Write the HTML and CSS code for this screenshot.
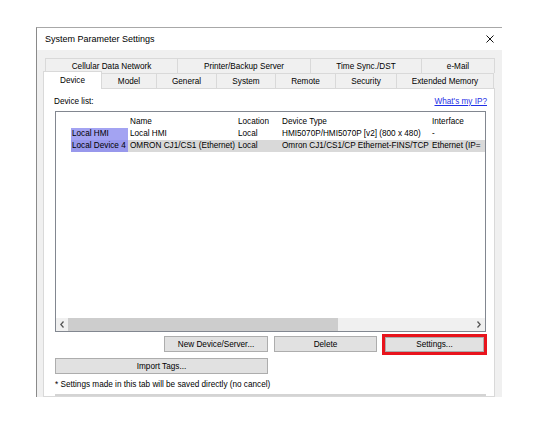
FILE: index.html
```html
<!DOCTYPE html>
<html>
<head>
<meta charset="utf-8">
<link rel="stylesheet" href="styles.css">
</head>
<body>
<div class="dialog">
  <div class="titlebar">
    <span class="title">System Parameter Settings</span>
    <svg class="close" width="8" height="8" viewBox="0 0 8 8"><path d="M0.5 0.5 L7.5 7.5 M7.5 0.5 L0.5 7.5" stroke="#111" stroke-width="1" fill="none"/></svg>
  </div>
  <div class="body">
    <div class="tabrow back">
      <div class="tab w132">Cellular Data Network</div>
      <div class="tab w133">Printer/Backup Server</div>
      <div class="tab w111">Time Sync./DST</div>
      <div class="tab w73 last">e-Mail</div>
    </div>
    <div class="tabrow front">
      <div class="tab sel w59">Device</div>
      <div class="tab w55">Model</div>
      <div class="tab w60">General</div>
      <div class="tab w59">System</div>
      <div class="tab w60">Remote</div>
      <div class="tab w61">Security</div>
      <div class="tab w97 last">Extended Memory</div>
    </div>
    <div class="panel">
      <div class="panel-head">
        <span class="label">Device list:</span>
        <a class="link" href="#">What's my IP?</a>
      </div>
      <div class="listbox">
        <div class="grid">
          <div class="row head">
            <div class="cell c0"></div>
            <div class="cell c1">Name</div>
            <div class="cell c2">Location</div>
            <div class="cell c3">Device Type</div>
            <div class="cell c4">Interface</div>
          </div>
          <div class="row">
            <div class="cell c0"><span class="tag">Local HMI</span></div>
            <div class="cell c1">Local HMI</div>
            <div class="cell c2">Local</div>
            <div class="cell c3">HMI5070P/HMI5070P [v2] (800 x 480)</div>
            <div class="cell c4">-</div>
          </div>
          <div class="row hl">
            <div class="cell c0"><span class="tag tag2">Local Device 4</span></div>
            <div class="cell c1">OMRON CJ1/CS1 (Ethernet)</div>
            <div class="cell c2">Local</div>
            <div class="cell c3">Omron CJ1/CS1/CP Ethernet-FINS/TCP</div>
            <div class="cell c4">Ethernet (IP=</div>
          </div>
        </div>
        <div class="hscroll">
          <div class="arrow"><svg width="4" height="7" viewBox="0 0 4 7"><path d="M3.5 0.5 L0.8 3.5 L3.5 6.5" stroke="#555" stroke-width="1.3" fill="none"/></svg></div>
          <div class="thumb"></div>
          <div class="track"></div>
          <div class="arrow"><svg width="4" height="7" viewBox="0 0 4 7"><path d="M0.5 0.5 L3.2 3.5 L0.5 6.5" stroke="#555" stroke-width="1.3" fill="none"/></svg></div>
        </div>
      </div>
      <div class="btnrow">
        <button class="btn b-new">New Device/Server...</button>
        <button class="btn b-del">Delete</button>
        <button class="btn b-set">Settings...</button>
      </div>
      <div class="importrow">
        <button class="btn b-imp">Import Tags...</button>
      </div>
      <p class="note">* Settings made in this tab will be saved directly (no cancel)</p>
      <div class="sep"></div>
    </div>
  </div>
</div>
</body>
</html>
```

FILE: styles.css
```css
* { box-sizing: border-box; }
html, body { margin: 0; padding: 0; background: #ffffff; }
body {
  font-family: "Liberation Sans", Arial, sans-serif;
  font-size: 8.2px;
  color: #000;
  width: 537px;
  height: 424px;
  overflow: hidden;
}
.dialog {
  margin: 27px 0 0 36px;
  width: 466px;
  height: 370px;
  border-left: 1px solid #8a8a8a;
  border-top: 1px solid #a8a8a8;
  background: #f0f0f0;
  overflow: hidden;
  display: flex;
  flex-direction: column;
}
.titlebar {
  height: 22px;
  flex: none;
  background: #ffffff;
  display: flex;
  align-items: center;
  justify-content: space-between;
  padding: 0 8px 0 8px;
}
.title { font-size: 9px; }
.close { display: block; margin-top: -1px; }
.body {
  flex: 1;
  display: flex;
  flex-direction: column;
  padding: 8px 7px 0 6px;
}
.tabrow {
  display: flex;
  height: 15px;
  flex: none;
}
.tabrow.back { padding-left: 2px; }
.tab {
  height: 15px;
  border-left: 1px solid #d9d9d9;
  border-top: 1px solid #d9d9d9;
  background: #f0f0f0;
  display: flex;
  align-items: center;
  justify-content: center;
  white-space: nowrap;
  padding-top: 1px;
}
.tab.last { border-right: 1px solid #d9d9d9; }
.tab.sel {
  position: relative;
  z-index: 2;
  background: #ffffff;
  height: 18px;
  margin-top: -2px;
  padding-top: 0;
  padding-bottom: 1px;
  border-right: 1px solid #d9d9d9;
  margin-right: -1px;
}
.w132 { width: 132px; }
.w133 { width: 133px; }
.w111 { width: 111px; }
.w73 { width: 74px; }
.w59 { width: 59px; }
.w55 { width: 55px; }
.w60 { width: 60px; }
.w61 { width: 61px; }
.w97 { width: 98px; }
.panel {
  flex: 1;
  background: #ffffff;
  border: 1px solid #d9d9d9;
  padding: 0 8px 0 11px;
  display: flex;
  flex-direction: column;
}
.panel-head {
  height: 22px;
  flex: none;
  display: flex;
  align-items: center;
  justify-content: space-between;
  padding-top: 2px;
}
.label { margin-left: -1px; }
.link { color: #1f2fe6; text-decoration: underline; margin-right: -1px; }
.listbox {
  width: 431px;
  height: 221px;
  flex: none;
  border: 1px solid #828790;
  display: flex;
  flex-direction: column;
  background: #ffffff;
}
.grid { flex: 1; }
.row {
  display: flex;
  height: 12px;
  line-height: 12px;
}
.row.head { height: 16px; line-height: 16px; padding-top: 2px; }
.cell {
  white-space: nowrap;
  overflow: hidden;
  padding-left: 2px;
}
.c0 { width: 72px; padding-left: 15px; }
.c1 { width: 108px; }
.c2 { width: 44px; }
.c3 { width: 150px; }
.c4 { flex: 1; }
.tag {
  display: block;
  background: #a3a3f2;
  height: 12px;
  padding-left: 1px;
}
.tag2 { background: #9898ec; }
.row.hl .c1, .row.hl .c2, .row.hl .c3, .row.hl .c4 { background: #d9d9d9; }
.hscroll {
  height: 13px;
  flex: none;
  display: flex;
  background: #f0f0f0;
}
.arrow {
  width: 12px;
  display: flex;
  align-items: center;
  justify-content: center;
}
.arrow svg { display: block; }
.thumb { width: 270px; background: #cdcdcd; }
.track { flex: 1; }
.btnrow {
  display: flex;
  justify-content: flex-end;
  margin-top: 4px;
  padding-right: 2px;
  flex: none;
}
.btn {
  font-family: "Liberation Sans", Arial, sans-serif;
  font-size: 8.2px;
  color: #000;
  background: #e1e1e1;
  border: 1px solid #adadad;
  height: 16px;
  padding: 0;
  margin: 0;
  display: block;
}
.b-new { width: 104px; }
.b-del { width: 103px; margin-left: 6px; }
.b-set { width: 99px; margin-left: 8px; outline: 3px solid #e8141d; outline-offset: 0; margin-top: 1px; height: 15px; }
.importrow { margin-top: 6px; flex: none; }
.b-imp { width: 213px; }
.note { margin: 5px 0 0 0; line-height: 12px; flex: none; }
.sep {
  margin-top: 3px;
  width: 431px;
  height: 2px;
  background: #d4d4d4;
  flex: none;
}
```
